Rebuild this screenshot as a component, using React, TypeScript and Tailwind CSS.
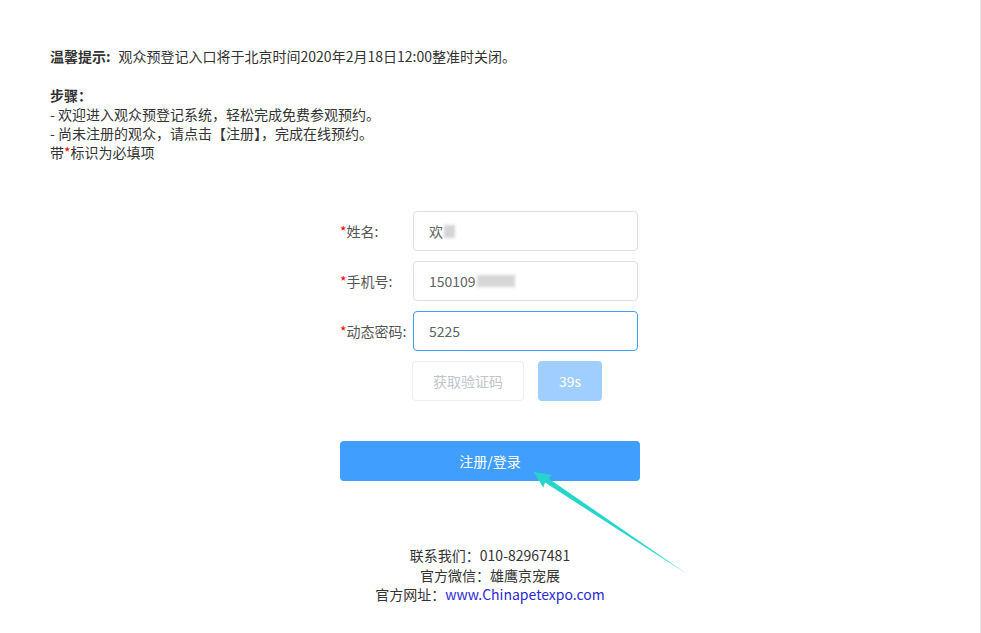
import React from "react";

const font = { fontFamily: '"Noto Sans CJK SC", "Noto Sans", sans-serif' };

function Label({ text }: { text: string }) {
  return (
    <div className="w-[73px] shrink-0 text-[14px] text-[#555]">
      <span className="text-[#f00]">*</span>
      {text}
    </div>
  );
}

export default function App() {
  return (
    <div
      className="relative h-[633px] w-full overflow-hidden border-r border-[#e8e8e8] bg-white text-[#333]"
      style={font}
    >
      <div className="px-[50px] pt-[47px] text-[14px] leading-[19px]">
        <p className="mb-[20px]">
          <span className="font-bold">温馨提示:</span>
          <span className="ml-[8px]">观众预登记入口将于北京时间2020年2月18日12:00整准时关闭。</span>
        </p>
        <p className="font-bold">步骤：</p>
        <p>- 欢迎进入观众预登记系统，轻松完成免费参观预约。</p>
        <p>- 尚未注册的观众，请点击【注册】，完成在线预约。</p>
        <p>
          带<span className="text-[#f00]">*</span>标识为必填项
        </p>
      </div>

      <div className="mx-auto mt-[49px] w-[300px]">
        <div className="flex h-[40px] items-center">
          <Label text="姓名:" />
          <div className="flex h-[40px] w-[225px] items-center rounded-[4px] border border-[#dcdfe6] px-[15px] text-[14px] text-[#606266]">
            欢
            <span className="ml-[1px] inline-block h-[13px] w-[11px] bg-[#d4d4d4] blur-[1.5px]" />
          </div>
        </div>
        <div className="mt-[10px] flex h-[40px] items-center">
          <Label text="手机号:" />
          <div className="flex h-[40px] w-[225px] items-center rounded-[4px] border border-[#dcdfe6] px-[15px] text-[14px] text-[#606266]">
            150109
            <span className="ml-[1px] inline-block h-[12px] w-[38px] bg-[#d6d6d6] blur-[1.5px]" />
          </div>
        </div>
        <div className="mt-[10px] flex h-[40px] items-center">
          <Label text="动态密码:" />
          <div className="flex h-[40px] w-[225px] items-center rounded-[4px] border border-[#409eff] px-[15px] text-[14px] text-[#606266]">
            5225
          </div>
        </div>
        <div className="mt-[10px] flex h-[40px] items-center pl-[72px]">
          <div className="flex h-[40px] w-[112px] items-center justify-center rounded-[4px] border border-[#ebeef5] text-[14px] text-[#c0c4cc]">
            获取验证码
          </div>
          <div className="ml-[14px] flex h-[40px] w-[64px] items-center justify-center rounded-[4px] bg-[#a0cfff] text-[14px] text-white">
            39s
          </div>
        </div>
        <div className="mt-[40px] flex h-[40px] w-[300px] items-center justify-center rounded-[4px] bg-[#409eff] text-[14px] text-white">
          注册/登录
        </div>
      </div>

      <div className="mt-[65px] text-center text-[14px] leading-[19.5px] text-[#333]">
        <p>联系我们：010-82967481</p>
        <p>官方微信：雄鹰京宠展</p>
        <p>
          官方网址：<span className="text-[#2a2ad4]">www.Chinapetexpo.com</span>
        </p>
      </div>

      <svg className="pointer-events-none absolute left-0 top-0" width="981" height="633">
        <polygon
          points="533.5,471.8 552,475 548.5,478.5 687,574 545,482.5 543.3,487.5"
          fill="#25d5cc"
        />
      </svg>
    </div>
  );
}
